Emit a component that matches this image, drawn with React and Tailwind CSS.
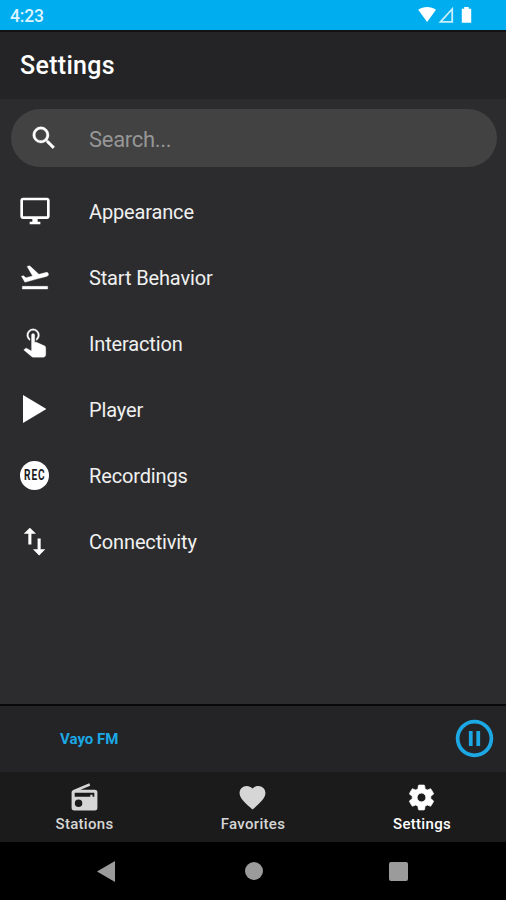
const Icon = ({ d, className, viewBox = "0 0 24 24" }) => (
  <svg viewBox={viewBox} className={`shrink-0 fill-current ${className}`} aria-hidden="true">
    <path fillRule="evenodd" d={d} />
  </svg>
);

const paths = {
  search:
    "M9.5 3A6.5 6.5 0 0 1 16 9.5c0 1.61-.59 3.09-1.56 4.23l.27.27h.79l5 5-1.5 1.5-5-5v-.79l-.27-.27A6.516 6.516 0 0 1 9.5 16a6.5 6.5 0 0 1 0-13m0 2C7 5 5 7 5 9.5S7 14 9.5 14 14 12 14 9.5 12 5 9.5 5Z",
  monitor:
    "M21 2H3c-1.1 0-2 .9-2 2v12c0 1.1.9 2 2 2h7v2H8v2h8v-2h-2v-2h7c1.1 0 2-.9 2-2V4c0-1.1-.9-2-2-2zm0 14H3V4h18v12z",
  takeoff:
    "M2.5 19h19v2h-19v-2zm19.57-9.36c-.21-.8-1.04-1.28-1.84-1.06L14.92 10l-6.9-6.43-1.93.51 4.14 7.17-4.97 1.33-1.97-1.54-1.45.39 2.59 4.49s7.12-1.9 16.57-4.43c.81-.23 1.28-1.05 1.07-1.85z",
  tap:
    "M10,9A1,1 0 0,1 11,8A1,1 0 0,1 12,9V13.47L13.21,13.6L18.15,15.79C18.68,16.03 19,16.56 19,17.14V21.5C18.97,22.32 18.32,22.97 17.5,23H11C10.62,23 10.26,22.85 10,22.57L5.1,18.37L5.84,17.6C6.03,17.39 6.3,17.28 6.58,17.28H6.8L10,19V9M11,5A4,4 0 0,1 15,9C15,10.5 14.2,11.77 13,12.46V11.24C13.61,10.69 14,9.89 14,9A3,3 0 0,0 11,6A3,3 0 0,0 8,9C8,9.89 8.39,10.69 9,11.24V12.46C7.8,11.77 7,10.5 7,9A4,4 0 0,1 11,5Z",
  play: "M0 0v28l23.5-14z",
  swap: "M9,3L5,7H8V14H10V7H13M16,17V10H14V17H11L15,21L19,17H16Z",
  pause: "M13 16V8h2v8h-2m-4 0V8h2v8H9m3-14a10 10 0 1 1 0 20 10 10 0 0 1 0-20m0 2a8 8 0 1 0 0 16 8 8 0 0 0 0-16Z",
  radio:
    "M20 6a2 2 0 0 1 2 2v12a2 2 0 0 1-2 2H4a2 2 0 0 1-2-2V8c0-.85.53-1.58 1.28-1.87L15.71 1l.76 1.83L8.83 6H20M4.4 8.4v3h12.1v-1.6h1.7v1.6h1.4v-3H4.4M7.4 13.6a2.9 2.9 0 1 0 0 5.8 2.9 2.9 0 0 0 0-5.8Z",
  heart:
    "M12 21.35l-1.45-1.32C5.4 15.36 2 12.28 2 8.5 2 5.42 4.42 3 7.5 3c1.74 0 3.41.81 4.5 2.09C13.09 3.81 14.76 3 16.5 3 19.58 3 22 5.42 22 8.5c0 3.78-3.4 6.86-8.55 11.54L12 21.35z",
  gear:
    "M19.14 12.94c.04-.3.06-.61.06-.94 0-.32-.02-.64-.07-.94l2.03-1.58c.18-.14.23-.41.12-.61l-1.92-3.32c-.12-.22-.37-.29-.59-.22l-2.39.96c-.5-.38-1.03-.7-1.62-.94l-.36-2.54c-.04-.24-.24-.41-.48-.41h-3.84c-.24 0-.43.17-.47.41l-.36 2.54c-.59.24-1.13.57-1.62.94l-2.39-.96c-.22-.08-.47 0-.59.22L2.74 8.87c-.12.21-.08.47.12.61l2.03 1.58c-.05.3-.09.63-.09.94s.02.64.07.94l-2.03 1.58c-.18.14-.23.41-.12.61l1.92 3.32c.12.22.37.29.59.22l2.39-.96c.5.38 1.03.7 1.62.94l.36 2.54c.05.24.24.41.48.41h3.84c.24 0 .44-.17.47-.41l.36-2.54c.59-.24 1.13-.56 1.62-.94l2.39.96c.22.08.47 0 .59-.22l1.92-3.32c.12-.22.07-.47-.12-.61l-2.01-1.58zM12 15.4a3.4 3.4 0 1 1 0-6.8 3.4 3.4 0 0 1 0 6.8z",
};

const items = [
  { label: "Appearance", icon: <Icon d={paths.monitor} className="size-8" /> },
  { label: "Start Behavior", icon: <Icon d={paths.takeoff} className="size-8 stroke-current stroke-[0.3]" /> },
  { label: "Interaction", icon: <Icon d={paths.tap} viewBox="2.9 4.5 18.6 19" className="size-[30px] stroke-current stroke-[0.2]" /> },
  { label: "Player", icon: <Icon d={paths.play} viewBox="0 0 23.5 28" className="h-7 w-[23.5px]" /> },
  {
    label: "Recordings",
    icon: (
      <span className="flex size-[29px] items-center justify-center rounded-full bg-white text-[14px] leading-none font-bold tracking-[1.3px] text-[#1c1c1e]">
        <span className="scale-x-[0.72] pl-[1px]">REC</span>
      </span>
    ),
  },
  { label: "Connectivity", icon: <Icon d={paths.swap} className="size-[37px]" /> },
];

const tabs = [
  { label: "Stations", d: paths.radio, color: "text-[#d6d6d6]", icon: "" },
  { label: "Favorites", d: paths.heart, color: "text-[#d6d6d6]", icon: "" },
  { label: "Settings", d: paths.gear, color: "text-white", icon: "stroke-current stroke-[0.6]" },
];

export default function App() {
  return (
    <div className="flex h-[900px] w-[506px] flex-col overflow-hidden bg-[#2c2c2e] font-['Roboto',sans-serif] text-white">
      <header className="flex h-[30px] shrink-0 items-center justify-between bg-[#00adef] pr-[33px] pl-[10px]">
        <span className="pt-[3px] text-[17.5px] leading-none font-medium tracking-[-0.2px] text-[#dcf4fe]">4:23</span>
        <svg viewBox="0 0 56 18" className="h-[18px] w-[56px]" aria-hidden="true">
          <path d="M1.2 3.8C6.5.1 13.7.1 19 3.8L10.1 16z" fill="#fff" />
          <path d="M23.5 15.8 35.2 3v12.8z" fill="none" stroke="#c9effd" strokeWidth="1.8" />
          <path d="M44.8 2.7h2.4V1h4.6v1.7h2.4v14h-9.4z" fill="#fff" />
        </svg>
      </header>

      <div className="flex h-[69px] shrink-0 items-center border-t-2 border-[#121214] bg-[#242426] pl-5">
        <h1 className="text-[25px] leading-none font-medium tracking-[0.3px]">Settings</h1>
      </div>

      <main className="flex flex-1 flex-col">
        <div className="mt-[10px] mr-[9px] ml-[11px] flex h-[58px] items-center rounded-full bg-[#424242] pl-[18px]">
          <Icon d={paths.search} className="size-[30px] stroke-current stroke-[0.3]" />
          <span className="ml-[30px] pt-[3px] text-[22px] leading-none tracking-[-0.3px] text-[#969696]">Search...</span>
        </div>
        <ul className="mt-[12px] flex flex-col">
          {items.map((item) => (
            <li key={item.label} className="flex h-[66px] items-center">
              <span className="flex w-[69px] justify-center pb-[2px]">{item.icon}</span>
              <span className="ml-5 text-[20px] leading-none tracking-[-0.15px] text-[#f0f0f0]">{item.label}</span>
            </li>
          ))}
        </ul>
      </main>

      <section className="flex h-[68px] shrink-0 items-center justify-between border-t-2 border-[#09090b] bg-[#242426] pr-[9px] pb-[2px] pl-[60px] text-[#1ba8e4]">
        <span className="pt-[2px] text-[15px] leading-none font-bold">Vayo FM</span>
        <Icon d={paths.pause} className="size-[45px]" />
      </section>

      <nav className="grid h-[70px] shrink-0 grid-cols-[168px_169px_169px] bg-[#1b1b1b]">
        {tabs.map((tab) => (
          <div key={tab.label} className={`flex flex-col items-center pt-[10px] ${tab.color}`}>
            <Icon d={tab.d} className={`size-[31px] ${tab.icon}`} />
            <span className="mt-1 pl-px text-[15px] leading-none font-medium tracking-[0.3px]">{tab.label}</span>
          </div>
        ))}
      </nav>

      <footer className="flex h-[58px] shrink-0 items-center bg-black pl-[97px] text-[#9b9b9b]">
        <svg viewBox="0 0 18 21" className="h-[21px] w-[18px] fill-current" aria-hidden="true">
          <path d="M18 0v21L0 10.5z" />
        </svg>
        <span className="ml-[130px] size-[18px] rounded-full bg-current" />
        <span className="ml-[126px] size-[19px] rounded-[2px] bg-current" />
      </footer>
    </div>
  );
}
